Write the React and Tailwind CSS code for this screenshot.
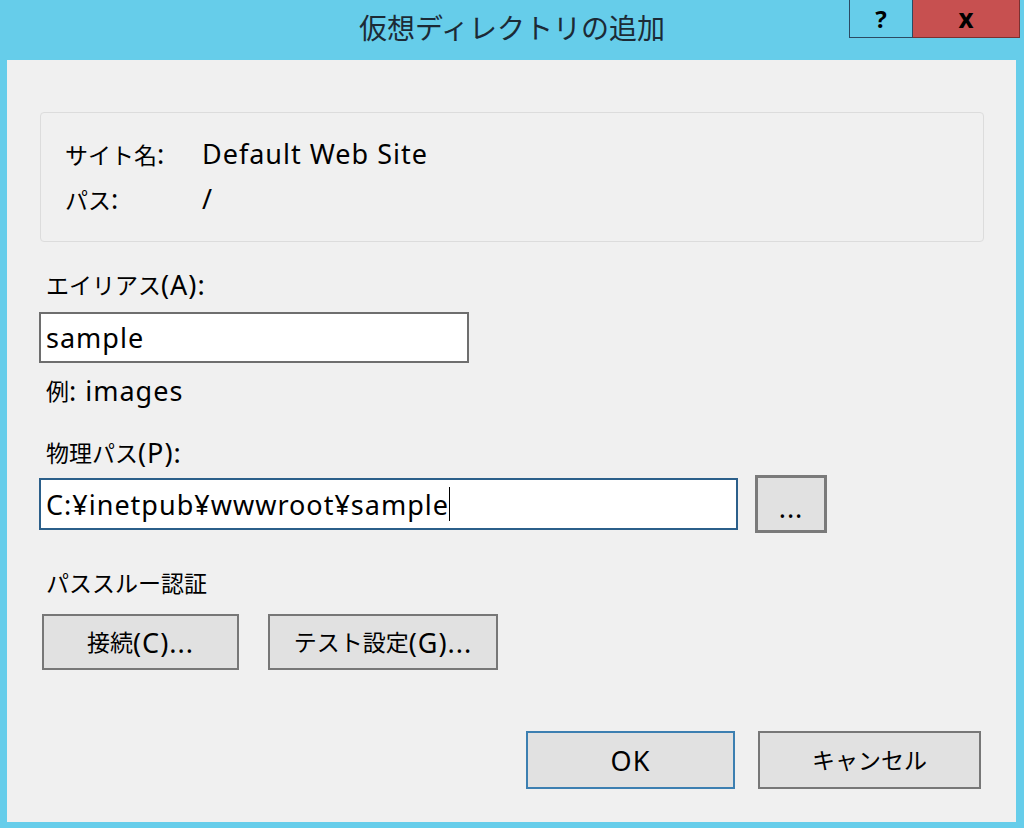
import React from 'react';

const font = { fontFamily: '"Noto Sans", "Noto Sans CJK JP", sans-serif' };

function Mixed({ text }) {
  const parts = text.split(/([\u3000-\u9fff\uff00-\uffef]+)/).filter(Boolean);
  return (
    <>
      {parts.map((p, i) =>
        /[\u3000-\u9fff\uff00-\uffef]/.test(p) ? (
          <span key={i} className="text-[23px]">{p}</span>
        ) : (
          <span key={i} className="text-[27px] tracking-[1px]">{p}</span>
        )
      )}
    </>
  );
}

function DialogButton({ label, className }) {
  return (
    <button
      className={`flex items-center justify-center bg-[#e1e1e1] text-black border-2 leading-none ${className}`}
    >
      <Mixed text={label} />
    </button>
  );
}

function Label({ text, className }) {
  return (
    <div className={`ml-[39px] h-[32px] flex items-center whitespace-pre ${className}`}>
      <Mixed text={text} />
    </div>
  );
}

export default function App() {
  return (
    <div
      className="w-[1024px] h-[828px] bg-[#66cdea] flex flex-col overflow-hidden"
      style={font}
    >
      {/* Title bar */}
      <div className="relative h-[60px] flex items-center justify-center shrink-0">
        <span className="text-[28px] text-[#1c2a36] leading-none mt-[-4px]">
          仮想ディレクトリの追加
        </span>
        <div className="absolute top-0 right-[4px] flex">
          <div className="w-[64px] h-[38px] border border-t-0 border-[#2c4a63] flex items-center justify-center text-[24px] font-bold text-black">
            ?
          </div>
          <div className="w-[107px] h-[38px] bg-[#c75050] border-b border-r border-[#7a3030] flex items-center justify-center text-[26px] font-bold text-black">
            x
          </div>
        </div>
      </div>

      {/* Client area */}
      <div className="flex-1 ml-[7px] mr-[8px] mb-[6px] bg-[#f0f0f0] flex flex-col text-black">
        {/* Site info box */}
        <div className="ml-[33px] mt-[52px] w-[944px] h-[130px] border border-[#dcdcdc] rounded-[4px] pl-[24px] pt-[24px]">
          <div className="flex h-[34px] items-center">
            <span className="w-[137px]"><Mixed text="サイト名:" /></span>
            <Mixed text="Default Web Site" />
          </div>
          <div className="flex h-[34px] items-center mt-[11px]">
            <span className="w-[137px]"><Mixed text="パス:" /></span>
            <Mixed text="/" />
          </div>
        </div>

        {/* Alias */}
        <Label text="エイリアス(A):" className="mt-[27px]" />
        <div className="ml-[32px] mt-[11px] w-[430px] h-[51px] bg-white border-2 border-[#6e6e6e] flex items-center pl-[5px] text-[27px] tracking-[1px] leading-none">
          sample
        </div>
        <Label text="例: images" className="mt-[12px]" />

        {/* Physical path */}
        <Label text="物理パス(P):" className="mt-[30px]" />
        <div className="ml-[32px] mt-[6px] flex items-center">
          <div className="w-[699px] h-[52px] bg-white border-2 border-[#2b5f8a] flex items-center pl-[5px] text-[27px] tracking-[1px] leading-none">
            C:¥inetpub¥wwwroot¥sample
            <span className="inline-block w-[1px] h-[34px] bg-black" />
          </div>
          <DialogButton
            label="..."
            className="ml-[17px] w-[72px] h-[58px] border-[3px] border-[#7a7a7a] bg-[#dcdcdc] pt-[6px] tracking-[3px]"
          />
        </div>

        {/* Pass-through auth */}
        <Label text="パススルー認証" className="mt-[34px]" />
        <div className="ml-[35px] mt-[15px] flex gap-[29px]">
          <DialogButton label="接続(C)..." className="w-[197px] h-[56px] border-[#777777]" />
          <DialogButton label="テスト設定(G)..." className="w-[230px] h-[56px] border-[#777777]" />
        </div>

        {/* OK / Cancel */}
        <div className="mt-[61px] mr-[35px] flex justify-end gap-[23px]">
          <DialogButton label="OK" className="w-[209px] h-[58px] border-[#3c7fb1]" />
          <DialogButton label="キャンセル" className="w-[223px] h-[58px] border-[#777777]" />
        </div>
      </div>
    </div>
  );
}
